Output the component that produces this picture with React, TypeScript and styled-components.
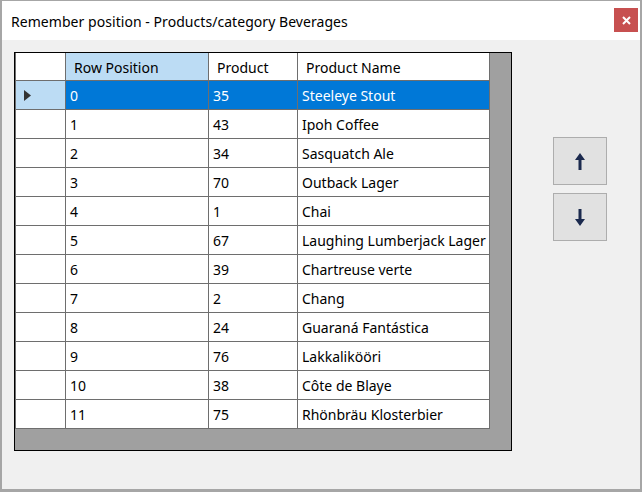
import styled, { createGlobalStyle } from 'styled-components';

const GlobalStyle = createGlobalStyle`
  html, body {
    margin: 0;
    padding: 0;
    background: #f0f0f0;
  }
  body {
    font-family: 'Noto Sans', 'Open Sans', sans-serif;
  }
`;

const Window = styled.div`
  box-sizing: border-box;
  width: 642px;
  height: 492px;
  border-style: solid;
  border-color: #a6a6a6;
  border-width: 1px 2px 3px 2px;
  background: #f0f0f0;
  display: flex;
  flex-direction: column;
`;

const TitleBar = styled.div`
  height: 39px;
  flex: 0 0 39px;
  background: #ffffff;
  display: flex;
  align-items: center;
  justify-content: space-between;
  padding: 0 2px 0 9px;
`;

const Title = styled.span`
  font-size: 14px;
  letter-spacing: 0.05px;
  color: #000;
  margin-top: 1px;
`;

const CloseButton = styled.button`
  width: 24px;
  height: 24px;
  margin-top: -1px;
  border: none;
  padding: 0;
  background: #c75050;
  display: flex;
  align-items: center;
  justify-content: center;
`;

const Body = styled.div`
  flex: 1;
  display: flex;
  align-items: flex-start;
  padding: 12px;
`;

const GridBox = styled.div`
  box-sizing: border-box;
  width: 498px;
  height: 399px;
  border: 1px solid #000;
  background: #a0a0a0;
`;

const Table = styled.div`
  display: grid;
  grid-template-columns: 50px 143px 89px 192px;
  width: 475px;
  border-left: 1px solid #6e6e6e;
`;

const Cell = styled.div<{ $header?: boolean; $selected?: boolean; $rowHead?: boolean; $hl?: boolean }>`
  box-sizing: border-box;
  height: ${(p) => (p.$header ? '28px' : '29px')};
  border-right: 1px solid #6e6e6e;
  border-bottom: 1px solid #6e6e6e;
  display: flex;
  align-items: center;
  padding-left: ${(p) => (p.$header ? '8px' : '4px')};
  padding-top: ${(p) => (p.$header ? '2px' : '0')};
  font-size: 14px;
  white-space: nowrap;
  overflow: hidden;
  color: ${(p) => (p.$selected ? '#ffffff' : '#000000')};
  background: ${(p) => (p.$hl ? '#bcdcf4' : p.$selected ? '#0078d7' : '#ffffff')};
  ${(p) => p.$rowHead && 'padding-left: 7px;'}
`;

const Side = styled.div`
  display: flex;
  flex-direction: column;
  gap: 8px;
  margin-left: 41px;
  margin-top: 85px;
`;

const MoveButton = styled.button`
  box-sizing: border-box;
  width: 54px;
  height: 48px;
  border: 1px solid #adadad;
  background: #e1e1e1;
  padding: 0;
  display: flex;
  align-items: center;
  justify-content: center;
`;

const rows: [number, number, string][] = [
  [0, 35, 'Steeleye Stout'],
  [1, 43, 'Ipoh Coffee'],
  [2, 34, 'Sasquatch Ale'],
  [3, 70, 'Outback Lager'],
  [4, 1, 'Chai'],
  [5, 67, 'Laughing Lumberjack Lager'],
  [6, 39, 'Chartreuse verte'],
  [7, 2, 'Chang'],
  [8, 24, 'Guaraná Fantástica'],
  [9, 76, 'Lakkalikööri'],
  [10, 38, 'Côte de Blaye'],
  [11, 75, 'Rhönbräu Klosterbier'],
];

const Arrow = ({ down }: { down?: boolean }) => (
  <svg width='10' height='17' viewBox='0 0 10 17' style={down ? { transform: 'rotate(180deg)' } : undefined}>
    <polygon points='5,0 10,7 6.5,7 6.5,17 3.5,17 3.5,7 0,7' fill='#1b2a4e' />
  </svg>
);

const App = () => {
  const selected = 0;
  return (
    <>
      <GlobalStyle />
      <Window>
        <TitleBar>
          <Title>Remember position - Products/category Beverages</Title>
          <CloseButton aria-label='Close'>
            <svg width='9' height='9' viewBox='0 0 9 9'>
              <path d='M1 1 L8 8 M8 1 L1 8' stroke='#fff' strokeWidth='2' />
            </svg>
          </CloseButton>
        </TitleBar>
        <Body>
          <GridBox>
            <Table>
              <Cell $header />
              <Cell $header $hl>Row Position</Cell>
              <Cell $header>Product</Cell>
              <Cell $header>Product Name</Cell>
              {rows.map(([pos, id, name]) => {
                const sel = pos === selected;
                return [
                  <Cell key={`h${pos}`} $rowHead $hl={sel}>
                    {sel && (
                      <svg width='7' height='11' viewBox='0 0 7 11' style={{ marginLeft: 1 }}>
                        <polygon points='0,0 7,5.5 0,11' fill='#333' />
                      </svg>
                    )}
                  </Cell>,
                  <Cell key={`p${pos}`} $selected={sel}>{pos}</Cell>,
                  <Cell key={`i${pos}`} $selected={sel}>{id}</Cell>,
                  <Cell key={`n${pos}`} $selected={sel}>{name}</Cell>,
                ];
              })}
            </Table>
          </GridBox>
          <Side>
            <MoveButton aria-label='Move up'>
              <Arrow />
            </MoveButton>
            <MoveButton aria-label='Move down'>
              <Arrow down />
            </MoveButton>
          </Side>
        </Body>
      </Window>
    </>
  );
};

export default App;
